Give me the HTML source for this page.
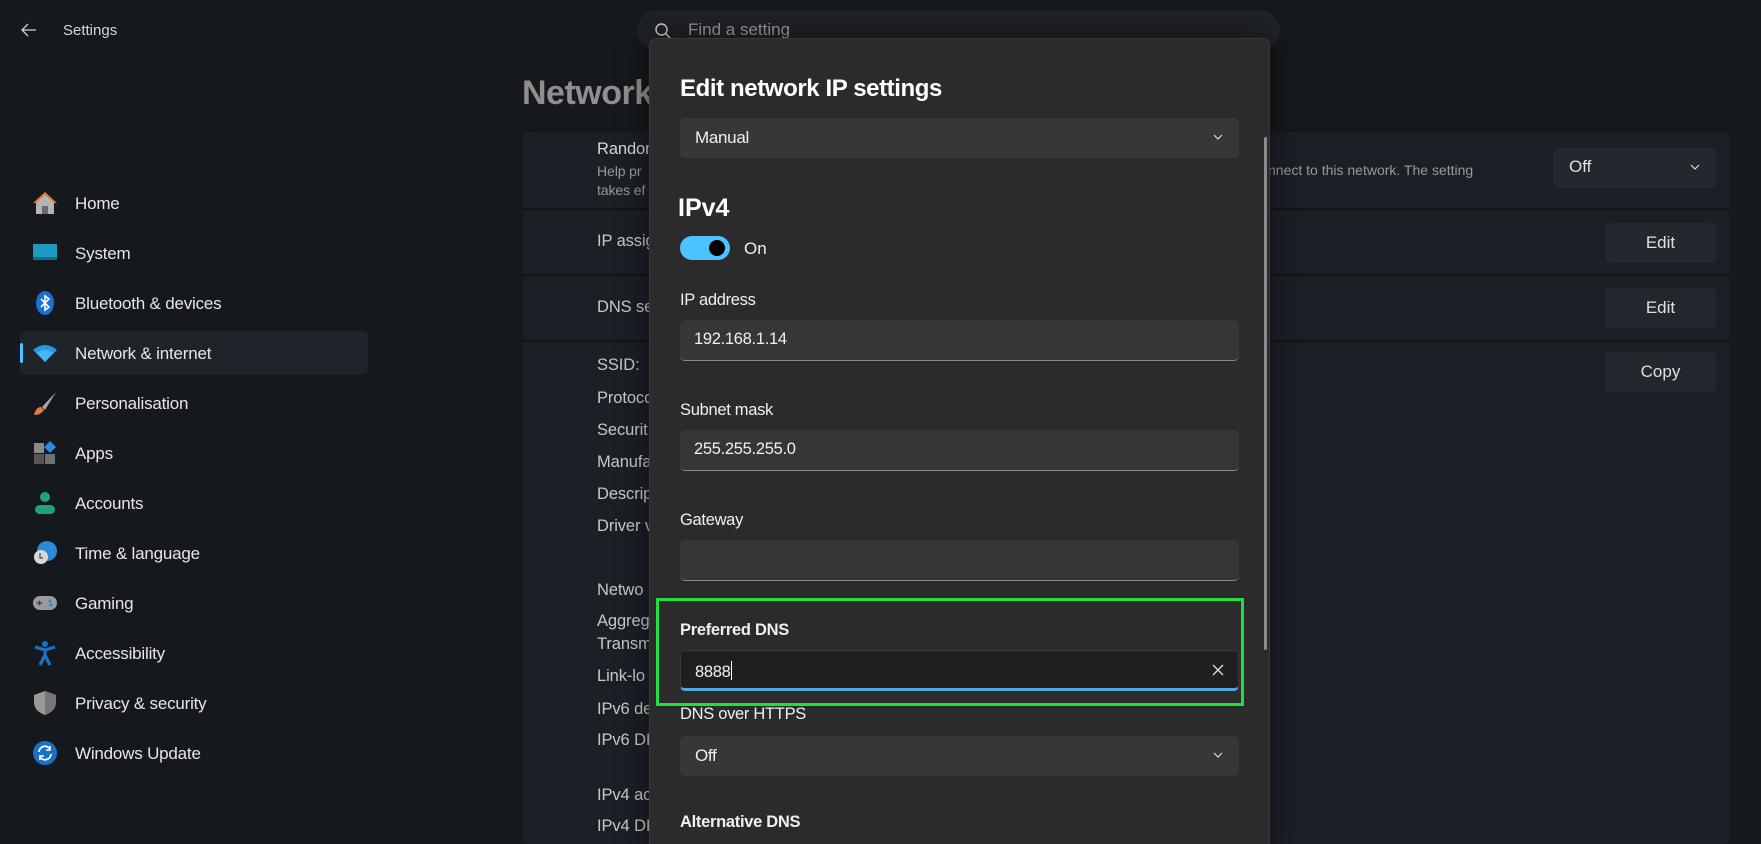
<!DOCTYPE html>
<html><head><meta charset="utf-8">
<style>
*{margin:0;padding:0;box-sizing:border-box}
html,body{width:1761px;height:844px;overflow:hidden}
body{background:#15181d;font-family:"Liberation Sans",sans-serif;color:#fff;position:relative}
.a{position:absolute;white-space:nowrap}
.nav{position:absolute;left:75px;font-size:17px;color:#e6e6e6;letter-spacing:-0.2px}
.ic{position:absolute;left:32px;width:26px;height:26px}
.lbl{position:absolute;left:597px;font-size:16.5px;color:#c9c9c9;letter-spacing:-0.1px}
.btn{position:absolute;background:#23272e;border-radius:5px;color:#e0e0e0;font-size:17px;text-align:center}
.dl{position:absolute;left:680px;font-size:16.5px;color:#f0f0f0;letter-spacing:-0.3px}
.inp{position:absolute;left:680px;width:559px;height:41px;background:#363636;border-radius:5px;border-bottom:1.5px solid #8a8a8a;font-size:16.5px;color:#f0f0f0;padding:10px 14px;letter-spacing:-0.3px}
.dd{position:absolute;left:680px;width:559px;height:40px;background:#373737;border-radius:5px;font-size:17px;color:#f0f0f0;padding:10px 15px;letter-spacing:-0.3px}
.chev{position:absolute;right:16px;top:14px;width:10px;height:10px}
</style></head><body>

<!-- top bar -->
<svg class="a" style="left:20px;top:22px" width="18" height="16" viewBox="0 0 18 16"><path d="M8 2 2 8l6 6M2 8h14" stroke="#cfcfcf" stroke-width="1.3" fill="none"/></svg>
<div class="a" style="left:63px;top:22px;font-size:15px;color:#d6d6d6">Settings</div>
<div class="a" style="left:637px;top:10px;width:643px;height:40px;background:#1f2227;border-radius:20px"></div>
<svg class="a" style="left:654px;top:22px" width="18" height="18" viewBox="0 0 18 18"><circle cx="7.5" cy="7.5" r="5.5" stroke="#cfcfcf" stroke-width="1.4" fill="none"/><path d="M11.5 11.5 16 16" stroke="#cfcfcf" stroke-width="1.4"/></svg>
<div class="a" style="left:688px;top:20px;font-size:17px;color:#9a9a9a">Find a setting</div>

<!-- Sidebar -->
<div class="a" style="left:20px;top:331px;width:348px;height:44px;background:#1f232a;border-radius:5px"></div>
<div class="a" style="left:20px;top:343px;width:3px;height:20px;background:#4cc2ff;border-radius:2px"></div>

<svg class="ic" style="top:190px" viewBox="0 0 26 26"><path d="M13 2 1 13h3v11h18V13h3z" fill="#e07b3c"/><path d="M4 13 13 5l9 8v11H4z" fill="#b5b5b5"/><rect x="10" y="16" width="6" height="8" fill="#6b6b6b"/></svg>
<div class="nav" style="top:194px">Home</div>
<svg class="ic" style="top:240px" viewBox="0 0 26 26"><rect x="1" y="4" width="24" height="16" rx="1" fill="#1d9bc4"/><rect x="1" y="17" width="24" height="3" fill="#126e8f"/></svg>
<div class="nav" style="top:244px">System</div>
<svg class="ic" style="top:290px" viewBox="0 0 26 26"><ellipse cx="13" cy="13" rx="9" ry="12" fill="#1a6fd6"/><path d="M9 9l8 8-4 3V6l4 3-8 8" stroke="#fff" stroke-width="1.6" fill="none"/></svg>
<div class="nav" style="top:294px">Bluetooth &amp; devices</div>
<svg class="ic" style="top:340px" viewBox="0 0 26 26"><path d="M1 10Q13 0 25 10L13 22z" fill="#2a9ae0"/><path d="M5 13Q13 7 21 13L13 22z" fill="#47b6f5"/></svg>
<div class="nav" style="top:344px">Network &amp; internet</div>
<svg class="ic" style="top:390px" viewBox="0 0 26 26"><path d="M24 2 10 17l3 3z" fill="#a8a8a8"/><path d="M9 17q-5 0-7 8 7 0 10-5z" fill="#e07b3c"/></svg>
<div class="nav" style="top:394px">Personalisation</div>
<svg class="ic" style="top:440px" viewBox="0 0 26 26"><rect x="2" y="3" width="10" height="10" fill="#8a8a8a"/><rect x="2" y="14" width="10" height="10" fill="#555"/><rect x="13" y="14" width="10" height="10" fill="#707070"/><path d="M18 1l6 6-6 6-6-6z" fill="#2a8ae0"/></svg>
<div class="nav" style="top:444px">Apps</div>
<svg class="ic" style="top:490px" viewBox="0 0 26 26"><circle cx="13" cy="7" r="5" fill="#1fa07f"/><rect x="3" y="15" width="20" height="9" rx="4.5" fill="#1fa07f"/></svg>
<div class="nav" style="top:494px">Accounts</div>
<svg class="ic" style="top:540px" viewBox="0 0 26 26"><circle cx="15" cy="11" r="10" fill="#2a8ad6"/><circle cx="9" cy="17" r="7" fill="#d8d8d8"/><path d="M8 13v5h3" stroke="#444" stroke-width="1.2" fill="none"/></svg>
<div class="nav" style="top:544px">Time &amp; language</div>
<svg class="ic" style="top:590px" viewBox="0 0 26 26"><rect x="1" y="6" width="24" height="14" rx="7" fill="#9a9a9a"/><path d="M5 13h5M7.5 10.5v5" stroke="#444" stroke-width="1.4"/><circle cx="18" cy="11" r="1.6" fill="#2a8ad6"/><circle cx="19" cy="15" r="1.6" fill="#2a8ad6"/></svg>
<div class="nav" style="top:594px">Gaming</div>
<svg class="ic" style="top:640px" viewBox="0 0 26 26"><circle cx="13" cy="4" r="3" fill="#1a72c8"/><path d="M3 7l10 3 10-3M13 10v5l-5 10M13 15l5 10" stroke="#1a72c8" stroke-width="3.2" fill="none"/></svg>
<div class="nav" style="top:644px">Accessibility</div>
<svg class="ic" style="top:690px" viewBox="0 0 26 26"><path d="M13 1 2 5v7q0 9 11 13 11-4 11-13V5z" fill="#9a9a9a"/><path d="M13 1v24q11-4 11-13V5z" fill="#777"/></svg>
<div class="nav" style="top:694px">Privacy &amp; security</div>
<svg class="ic" style="top:740px" viewBox="0 0 26 26"><circle cx="13" cy="13" r="12" fill="#1a72c8"/><path d="M7 12a6 6 0 0 1 11-3M19 14a6 6 0 0 1-11 3" stroke="#fff" stroke-width="1.8" fill="none"/><path d="M18 6v4h-4M8 20v-4h4" stroke="#fff" stroke-width="1.6" fill="none"/></svg>
<div class="nav" style="top:744px">Windows Update</div>

<!-- Main content behind -->
<div class="a" style="left:522px;top:74px;font-size:34px;font-weight:bold;color:#8f8f8f;letter-spacing:-0.5px">Network</div>
<div class="a" style="left:523px;top:132px;width:1206px;height:712px;background:#1b1f26;border-radius:6px"></div>
<div class="a" style="left:523px;top:208px;width:1206px;height:2px;background:#121419"></div>
<div class="a" style="left:523px;top:274px;width:1206px;height:2px;background:#121419"></div>
<div class="a" style="left:523px;top:340px;width:1206px;height:2px;background:#121419"></div>
<div class="lbl" style="top:140px;color:#d8d8d8">Random</div>
<div class="lbl" style="top:163px;font-size:14px;color:#9a9a9a">Help pr</div>
<div class="lbl" style="top:182px;font-size:14px;color:#9a9a9a">takes ef</div>
<div class="a" style="left:1268px;top:162px;font-size:14px;color:#9a9a9a">nnect to this network. The setting</div>
<div class="lbl" style="top:232px">IP assig</div>
<div class="lbl" style="top:298px">DNS se</div>
<div class="lbl" style="top:356px">SSID:</div>
<div class="lbl" style="top:389px">Protoco</div>
<div class="lbl" style="top:421px">Securit</div>
<div class="lbl" style="top:453px">Manufa</div>
<div class="lbl" style="top:485px">Descrip</div>
<div class="lbl" style="top:517px">Driver v</div>
<div class="lbl" style="top:581px">Netwo</div>
<div class="lbl" style="top:612px">Aggreg</div>
<div class="lbl" style="top:635px">Transm</div>
<div class="lbl" style="top:667px">Link-lo</div>
<div class="lbl" style="top:700px">IPv6 de</div>
<div class="lbl" style="top:731px">IPv6 DI</div>
<div class="lbl" style="top:786px">IPv4 ac</div>
<div class="lbl" style="top:817px">IPv4 DI</div>

<div class="btn" style="left:1554px;top:148px;width:162px;height:40px;text-align:left;padding:9px 15px">Off<svg class="chev" viewBox="0 0 10 10"><path d="M1 3l4 4 4-4" stroke="#ddd" stroke-width="1.2" fill="none"/></svg></div>
<div class="btn" style="left:1605px;top:223px;width:111px;height:40px;padding-top:10px">Edit</div>
<div class="btn" style="left:1605px;top:288px;width:111px;height:40px;padding-top:10px">Edit</div>
<div class="btn" style="left:1605px;top:352px;width:111px;height:40px;padding-top:10px">Copy</div>

<!-- Dialog -->
<div class="a" style="left:649px;top:38px;width:621px;height:820px;background:#2b2b2b;border:1px solid #3a3a3a;border-radius:8px;box-shadow:0 0 30px rgba(0,0,0,.5)"></div>
<div class="a" style="left:1264px;top:137px;width:3px;height:513px;background:#8a8a8a;border-radius:2px"></div>
<div class="a" style="left:680px;top:75px;font-size:24px;font-weight:bold;color:#fff;letter-spacing:-0.4px">Edit network IP settings</div>
<div class="dd" style="top:118px">Manual<svg class="chev" viewBox="0 0 10 10"><path d="M1 3l4 4 4-4" stroke="#ddd" stroke-width="1.2" fill="none"/></svg></div>
<div class="a" style="left:678px;top:194px;font-size:25px;font-weight:bold;color:#fff">IPv4</div>
<div class="a" style="left:680px;top:236px;width:50px;height:24px;background:#4cc2ff;border-radius:12px"></div>
<div class="a" style="left:709px;top:240px;width:16px;height:16px;background:#000;border-radius:50%"></div>
<div class="a" style="left:744px;top:239px;font-size:17px;color:#f0f0f0">On</div>

<div class="dl" style="top:291px">IP address</div>
<div class="inp" style="top:320px">192.168.1.14</div>
<div class="dl" style="top:401px">Subnet mask</div>
<div class="inp" style="top:430px">255.255.255.0</div>
<div class="dl" style="top:511px">Gateway</div>
<div class="inp" style="top:540px"></div>

<div class="a" style="left:656px;top:598px;width:588px;height:108px;border:3px solid #1fe040"></div>
<div class="dl" style="top:621px;font-weight:bold">Preferred DNS</div>
<div class="inp" style="top:650px;background:#1f1f1f;border:1px solid #3a3a3a;border-bottom:3px solid #4fa8dc">8888<span style="display:inline-block;width:1px;height:19px;background:#fff;vertical-align:-3px"></span>
<svg style="position:absolute;right:14px;top:13px" width="12" height="12" viewBox="0 0 12 12"><path d="M1 1l10 10M11 1 1 11" stroke="#ddd" stroke-width="1.3"/></svg></div>
<div class="dl" style="top:705px">DNS over HTTPS</div>
<div class="dd" style="top:736px">Off<svg class="chev" viewBox="0 0 10 10"><path d="M1 3l4 4 4-4" stroke="#ddd" stroke-width="1.2" fill="none"/></svg></div>
<div class="dl" style="top:813px;font-weight:bold">Alternative DNS</div>
</body></html>
